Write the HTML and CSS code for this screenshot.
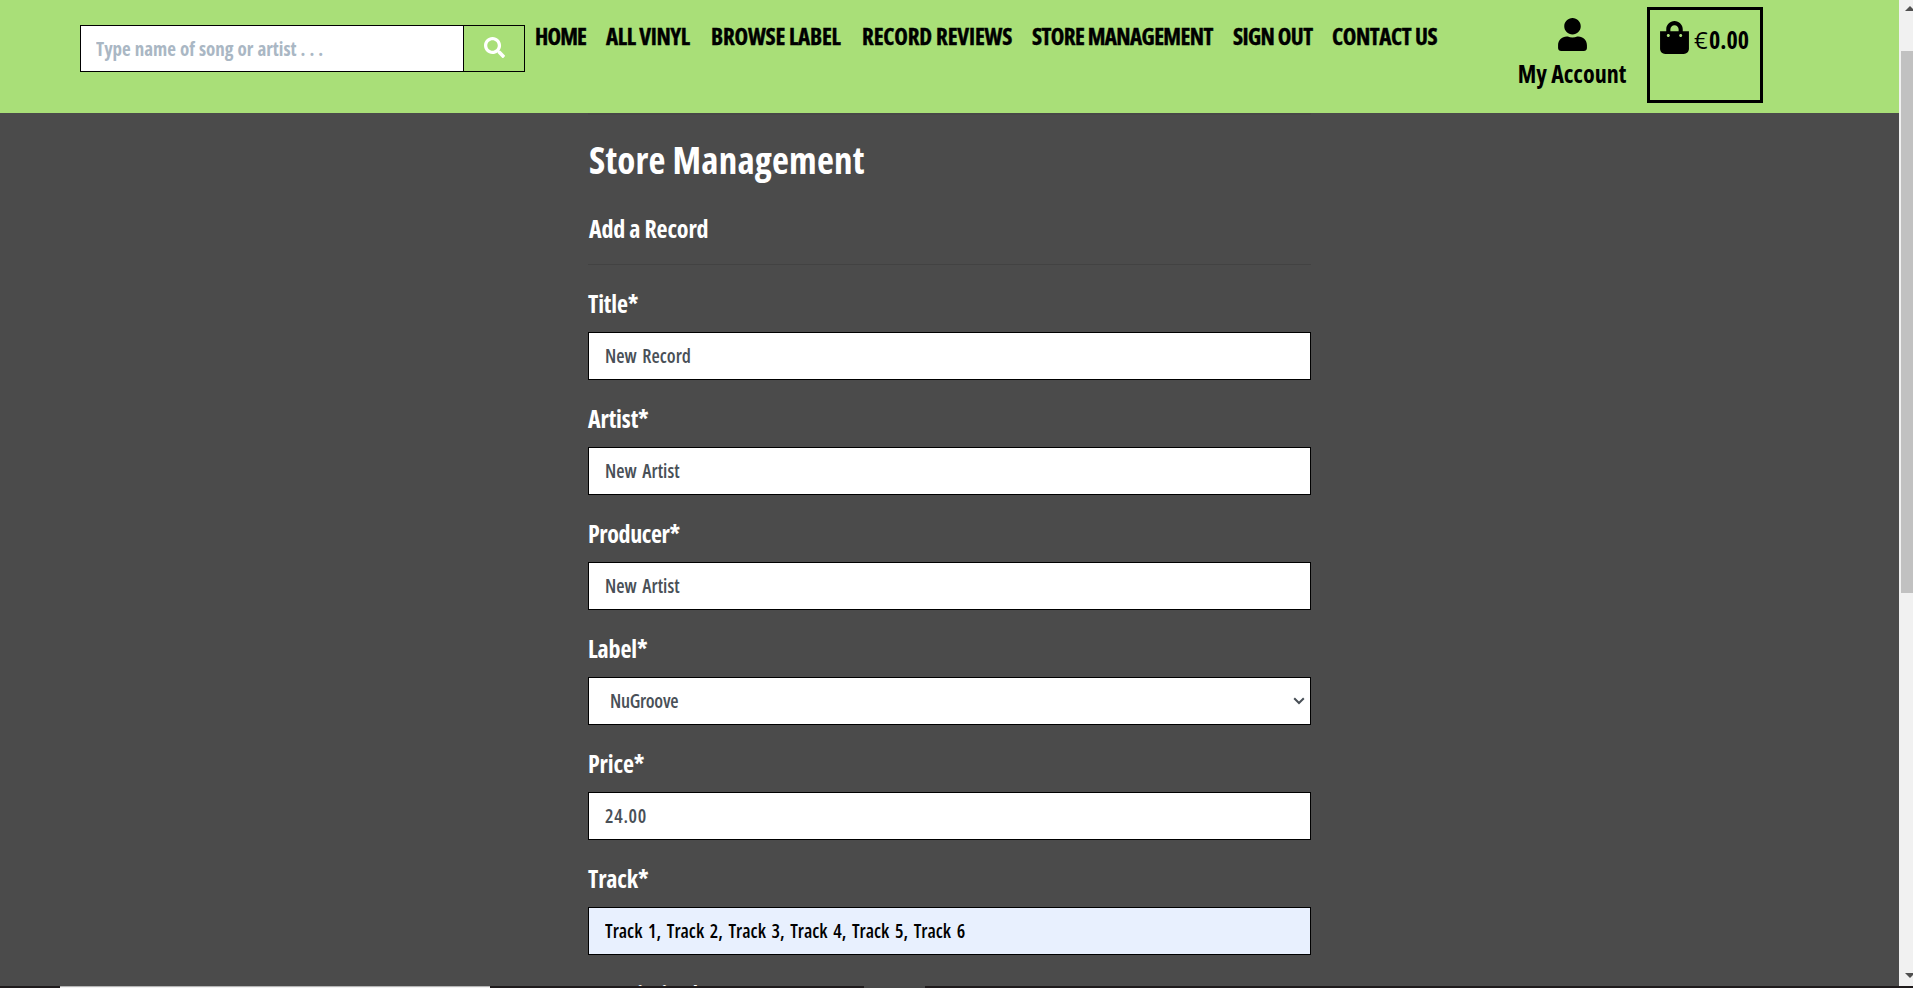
FILE: index.html
```
<!DOCTYPE html>
<html lang="en">
<head>
<meta charset="utf-8">
<title>Store Management</title>
<link rel="stylesheet" href="styles.css">
</head>
<body>
<div class="window">
  <div class="page">
    <header class="header">
      <form class="search">
        <input class="search-input" type="text" placeholder="Type name of song or artist . . .">
        <button class="search-button" type="button" aria-label="Search">
          <svg width="21" height="21" viewBox="0 0 512 512"><path fill="#fff" d="M505 442.7L405.300 343c-4.500-4.500-10.600-7-17-7H372c27.600-35.300 44-79.700 44-128C416 93.100 322.900 0 208 0S0 93.100 0 208s93.100 208 208 208c48.300 0 92.700-16.400 128-44v16.300c0 6.400 2.500 12.500 7 17l99.700 99.700c9.400 9.400 24.600 9.400 33.900 0l28.300-28.300c9.400-9.400 9.400-24.600.1-34zM208 336c-70.700 0-128-57.200-128-128 0-70.700 57.200-128 128-128 70.700 0 128 57.200 128 128 0 70.700-57.200 128-128 128z"/></svg>
        </button>
      </form>
      <nav class="nav">
        <a class="n-home">HOME</a>
        <a class="n-vinyl">ALL VINYL</a>
        <a class="n-label">BROWSE LABEL</a>
        <a class="n-reviews">RECORD REVIEWS</a>
        <a class="n-store">STORE MANAGEMENT</a>
        <a class="n-out">SIGN OUT</a>
        <a class="n-contact">CONTACT US</a>
      </nav>
      <a class="account">
        <svg width="29" height="33" viewBox="0 0 448 512"><path d="M224 256c70.700 0 128-57.300 128-128S294.700 0 224 0 96 57.300 96 128s57.300 128 128 128zm89.600 32h-16.700c-22.200 10.200-46.900 16-72.900 16s-50.600-5.800-72.900-16h-16.700C60.200 288 0 348.200 0 422.400V464c0 26.500 21.500 48 48 48h352c26.500 0 48-21.500 48-48v-41.600c0-74.200-60.200-134.400-134.400-134.400z"/></svg>
        <span>My Account</span>
      </a>
      <a class="bag">
        <svg width="29" height="33" viewBox="0 0 448 512"><path d="M352 160v-32C352 57.420 294.579 0 224 0 153.420 0 96 57.420 96 128v32H0v272c0 44.183 35.817 80 80 80h288c44.183 0 80-35.817 80-80V160h-96zm-192-32c0-35.290 28.710-64 64-64s64 28.710 64 64v32H160v-32zm160 120c-13.255 0-24-10.745-24-24s10.745-24 24-24 24 10.745 24 24-10.745 24-24 24zm-192 0c-13.255 0-24-10.745-24-24s10.745-24 24-24 24 10.745 24 24-10.745 24-24 24z"/></svg>
        <span class="total"><span class="euro">€</span>0.00</span>
      </a>
    </header>
    <main class="content">
      <h2>Store Management</h2>
      <h5>Add a Record</h5>
      <hr>
      <label class="field"><span>Title*</span><input type="text" value="New Record"></label>
      <label class="field"><span>Artist*</span><input type="text" value="New Artist"></label>
      <label class="field"><span class="tight">Producer*</span><input type="text" value="New Artist"></label>
      <label class="field"><span>Label*</span>
        <span class="select"><span>NuGroove</span>
          <svg width="12" height="8" viewBox="0 0 12 8"><path d="M1.200 1.200L6 6l4.800-4.800" fill="none" stroke="#495057" stroke-width="2"/></svg>
        </span></label>
      <label class="field"><span>Price*</span><input class="price" type="text" value="24.00"></label>
      <label class="field"><span>Track*</span><input class="autofilled" type="text" value="Track 1, Track 2, Track 3, Track 4, Track 5, Track 6"></label>
      <label class="field last"><span class="tight">Description*</span></label>
    </main>
  </div>
  <div class="scrollbar">
    <svg width="14" height="51" viewBox="0 0 14 51"><path d="M6 11L11 6L16 11Z" fill="#505050"/></svg>
    <div class="thumb"></div>
    <svg width="14" height="17" viewBox="0 0 14 17"><path d="M6 4L11 9L16 4Z" fill="#505050"/></svg>
  </div>
</div>
<div class="taskbar"><div class="task-light"></div><div class="task-dark"></div></div>
</body>
</html>
```
FILE: styles.css
```
* { box-sizing: border-box; }

body {
  margin: 0;
  height: 988px;
  overflow: hidden;
  background: #4b4b4b;
  font-family: "Open Sans", "Roboto", sans-serif;
  font-stretch: 75%;
  font-weight: 700;
  color: #000;
}

svg { display: block; flex: none; }

.window { display: flex; height: 986px; }
.page { flex: 1; overflow: hidden; height: 986px; }

.header {
  display: flex;
  align-items: flex-start;
  height: 113px;
  padding-left: 80px;
  background: #a9df78;
}

.search { display: flex; width: 445px; height: 47px; margin-top: 25px; }
.search-input,
.search-button { border: 1px solid #000; border-radius: 0; margin: 0; }
.search-input {
  width: 384px;
  padding: 0 15px;
  background: #fff;
  font: inherit;
  font-size: 19px;
  word-spacing: 0.6px;
}
.search-input::placeholder { color: #aab7c4; opacity: 1; }
.search-button {
  width: 62px;
  margin-left: -1px;
  padding: 0 0 2px;
  background: #a9df78;
  display: flex;
  align-items: center;
  justify-content: center;
}

.nav {
  display: flex;
  margin: 21px 0 0 10px;
  font-size: 23px;
  line-height: 30px;
  letter-spacing: -0.6px;
  white-space: nowrap;
  -webkit-text-stroke: 0.4px #000;
}
.n-home { width: 71px; letter-spacing: -0.9px; }
.n-vinyl { width: 105px; letter-spacing: -0.4px; }
.n-label { width: 151px; letter-spacing: -0.2px; }
.n-reviews { width: 170px; letter-spacing: -0.15px; }
.n-store { width: 201px; }
.n-out { width: 99px; }
.n-contact { width: 106px; letter-spacing: -0.4px; }

.account {
  display: flex;
  flex-direction: column;
  align-items: center;
  width: 112px;
  margin: 18px 0 0 78px;
  font-size: 24px;
  line-height: 30px;
  white-space: nowrap;
}
.account span { margin-top: 8px; }

.bag {
  display: flex;
  width: 116px;
  height: 96px;
  margin: 7px 0 0 19px;
  padding: 11px 0 0 10px;
  border: 3px solid #000;
}
.total {
  display: flex;
  margin: 4px 0 0 5px;
  font-size: 24px;
  line-height: 30px;
}
.euro { width: 15px; font-stretch: 100%; font-weight: 400; }

.content { width: 723px; margin-left: 588px; border-top: 2px solid #474747; color: #fff; }
h2, h5 { margin: 0; padding-left: 1px; white-space: nowrap; }
h2 { margin-top: 21px; font-size: 37px; line-height: 48px; letter-spacing: 0.2px; }
h5 { margin-top: 30px; font-size: 24px; line-height: 30px; letter-spacing: -0.15px; }
hr { height: 1px; margin: 20px 0 24px; border: 0; background: #424242; }

.field { display: block; height: 115px; font-size: 24px; }
.field > span:first-child { display: block; height: 43px; line-height: 30px; letter-spacing: -0.15px; }
.field > .tight:first-child { letter-spacing: -0.4px; }
.last { padding-top: 1px; }
.field input,
.select {
  display: flex;
  align-items: center;
  width: 723px;
  height: 48px;
  margin: 0;
  padding: 0 16px;
  border: 1px solid #000;
  border-radius: 0;
  background: #fff;
  color: #495057;
  font: inherit;
  font-size: 19px;
  font-weight: 650;
  word-spacing: 2.2px;
}
.select { justify-content: space-between; padding: 0 5px 0 21px; letter-spacing: -0.3px; }
.field .price { letter-spacing: 0.7px; }
.field .autofilled { background: #e8f0fe; color: #000; }

.scrollbar {
  display: flex;
  flex-direction: column;
  width: 14px;
  background: #f1f1f1;
}
.thumb { height: 542px; margin: 0 0 auto 2px; background: #c1c1c1; }

.taskbar { display: flex; height: 2px; background: #1f1b1c; }
.task-light { width: 430px; margin-left: 60px; border-top: 1px solid #b5b5b5; background: #f3f3f3; }
.task-dark { width: 61px; margin-left: 374px; background: #484848; }
```
